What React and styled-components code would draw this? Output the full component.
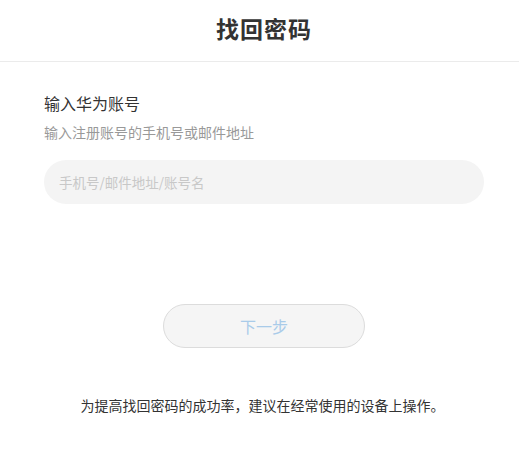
import React from "react";
import styled, { createGlobalStyle } from "styled-components";

const GlobalStyle = createGlobalStyle`
  body {
    margin: 0;
    background: #fff;
    font-family: "Microsoft YaHei", "Noto Sans CJK SC", sans-serif;
  }
`;

const Header = styled.header`
  height: 62px;
  box-sizing: border-box;
  padding: 0 0 6px 9px;
  display: flex;
  align-items: center;
  justify-content: center;
  border-bottom: 1px solid #ebebeb;
`;

const Title = styled.h1`
  margin: 0;
  font-size: 23px;
  font-weight: 700;
  color: #333;
  letter-spacing: 1px;
  line-height: 30px;
`;

const Body = styled.main`
  padding: 30px 35px 0 44px;
  display: flex;
  flex-direction: column;
`;

const Label = styled.div`
  font-size: 16px;
  color: #333;
  line-height: 22px;
`;

const Hint = styled.div`
  margin-top: 9px;
  font-size: 14px;
  color: #999;
  line-height: 18px;
`;

const Input = styled.input`
  margin-top: 19px;
  height: 44px;
  border: none;
  outline: none;
  border-radius: 22px;
  background: #f4f4f4;
  padding: 0 15px;
  font-family: inherit;
  font-size: 13.5px;
  color: #333;

  &::placeholder {
    color: #c8c8c8;
  }
`;

const ButtonRow = styled.div`
  margin-top: 100px;
  display: flex;
  justify-content: center;
`;

const Button = styled.button`
  width: 202px;
  height: 44px;
  border-radius: 22px;
  border: 1px solid #dcdcdc;
  background: #f5f5f5;
  color: #a9cbe9;
  font-family: inherit;
  font-size: 16px;
  cursor: default;
`;

const Note = styled.p`
  margin: 47px 0 0;
  padding-left: 6px;
  text-align: center;
  font-size: 14px;
  line-height: 20px;
  color: #333;
`;

export default function App() {
  return (
    <>
      <GlobalStyle />
      <Header>
        <Title>找回密码</Title>
      </Header>
      <Body>
        <Label>输入华为账号</Label>
        <Hint>输入注册账号的手机号或邮件地址</Hint>
        <Input placeholder="手机号/邮件地址/账号名" />
        <ButtonRow>
          <Button disabled>下一步</Button>
        </ButtonRow>
      </Body>
      <Note>为提高找回密码的成功率，建议在经常使用的设备上操作。</Note>
    </>
  );
}
